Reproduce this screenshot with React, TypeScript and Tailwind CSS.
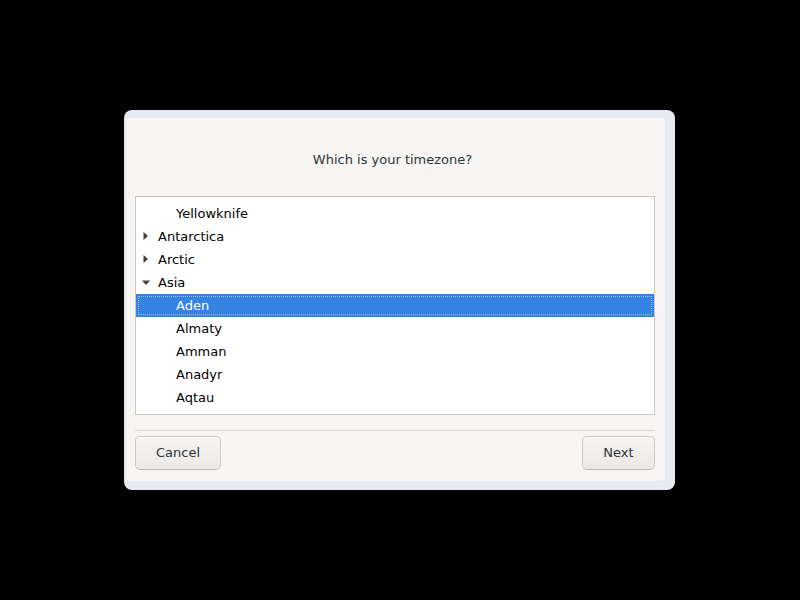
const rows = [
  { label: "Yellowknife", depth: 1 },
  { label: "Antarctica", depth: 0, expander: "closed" },
  { label: "Arctic", depth: 0, expander: "closed" },
  { label: "Asia", depth: 0, expander: "open" },
  { label: "Aden", depth: 1, selected: true },
  { label: "Almaty", depth: 1 },
  { label: "Amman", depth: 1 },
  { label: "Anadyr", depth: 1 },
  { label: "Aqtau", depth: 1 },
];

function Expander({ open }: { open: boolean }) {
  if (open) {
    return (
      <svg width="10" height="6" viewBox="0 0 10 6" className="absolute left-[5px] top-[9px]">
        <path d="M1 0.5h8L5 5z" fill="#3b3f41" />
      </svg>
    );
  }
  return (
    <svg width="6" height="10" viewBox="0 0 6 10" className="absolute left-[7px] top-[6px]">
      <path d="M0.5 1v8L5 5z" fill="#3b3f41" />
    </svg>
  );
}

function Button({ label, width }: { label: string; width: string }) {
  return (
    <button
      className={`${width} h-[34px] rounded-[5px] border border-[#cdc7c2] border-b-[#bfb8b1] bg-gradient-to-b from-[#f6f5f4] to-[#ebe8e6] text-[13px] text-[#2e3436] shadow-[inset_0_1px_0_rgba(255,255,255,0.6)]`}
    >
      {label}
    </button>
  );
}

export default function App() {
  return (
    <div
      className="w-[800px] h-[600px] bg-black pt-[110px] pl-[124px]"
      style={{ fontFamily: '"DejaVu Sans", "Noto Sans", sans-serif' }}
    >
      {/* window frame */}
      <div className="w-[551px] h-[380px] rounded-[8px] bg-[#e6ebf1] pl-[2px] pt-[8px] pr-[10px] pb-[9px] flex">
        <div className="flex-1 bg-[#f6f5f4] rounded-[3px] flex flex-col pl-[9px] pr-[10px]">
          <div className="h-[78px] pt-[33px] pr-[5px] text-center text-[13px] leading-[18px] text-[#2e3436]">
            Which is your timezone?
          </div>

          <div className="h-[219px] border border-[#cdc7c2] bg-white pt-[5px] overflow-hidden">
            {rows.map((row) => (
              <div
                key={row.label}
                className={`relative h-[23px] flex items-center text-[13px] ${
                  row.selected ? "bg-[#3584e4] text-white" : "text-black"
                }`}
              >
                {row.selected && (
                  <div className="absolute inset-[2px] border border-dotted border-white/50" />
                )}
                {row.expander && <Expander open={row.expander === "open"} />}
                <span className={row.depth === 1 ? "pl-[40px]" : "pl-[22px]"}>{row.label}</span>
              </div>
            ))}
          </div>

          <div className="mt-[15px] h-px bg-[#dcd8d4]" />

          <div className="mt-[5px] flex justify-between">
            <Button label="Cancel" width="w-[86px]" />
            <Button label="Next" width="w-[73px]" />
          </div>
        </div>
      </div>
    </div>
  );
}
